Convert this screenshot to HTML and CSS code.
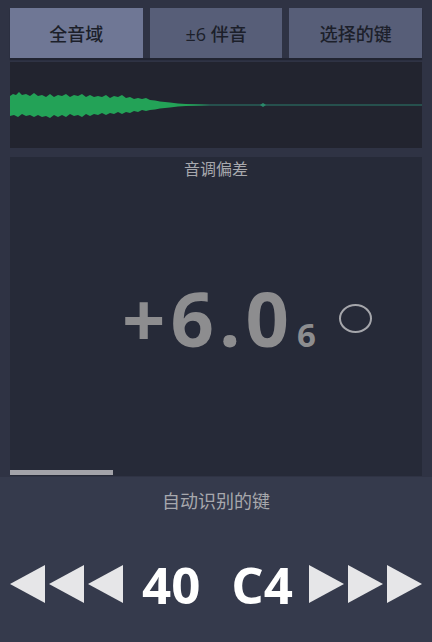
FILE: index.html
```html
<!DOCTYPE html>
<html lang="zh">
<head>
<meta charset="utf-8">
<link rel="stylesheet" href="styles.css">
</head>
<body>
<div class="top">
  <div class="tabs">
    <div class="tab active">全音域</div>
    <div class="tab">±6 伴音</div>
    <div class="tab">选择的键</div>
  </div>
  <div class="wave">
    <svg width="412" height="86" viewBox="0 0 412 86">
      <path d="M0 43 L412 43" stroke="#2b7d6c" stroke-width="1.2" fill="none"/>
      <path fill="#23a257" d="M0 34 L3 32 L6 33 L9 30 L12 33 L16 32 L20 34 L24 31 L28 34 L32 33 L36 35 L40 32 L44 35 L48 33 L52 34 L56 32 L60 35 L64 33 L68 34 L72 32 L76 35 L80 33 L84 35 L88 34 L92 35 L96 33 L100 36 L104 34 L108 35 L112 33 L116 36 L120 35 L124 37 L128 36 L132 37 L136 36 L140 38 L145 38.5 L150 39.5 L155 40 L160 40.5 L168 41.5 L176 42 L190 42.5 L200 43 L190 43.5 L176 44 L168 44.5 L160 45.5 L155 46 L150 46.5 L145 47.5 L140 48 L136 49 L132 48 L128 50 L124 49 L120 51 L116 50 L112 52 L108 50 L104 52 L100 51 L96 53 L92 51 L88 53 L84 52 L80 54 L76 52 L72 55 L68 53 L64 54 L60 52 L56 55 L52 53 L48 55 L44 53 L40 56 L36 54 L32 55 L28 53 L24 55 L20 53 L16 54 L12 52 L8 55 L4 53 L0 54 Z"/>
      <path fill="#2a8a6a" d="M253 41 L256 43 L253 45 L250 43 Z"/>
    </svg>
  </div>
  <div class="tuner">
    <div class="label">音调偏差</div>
    <div class="readout">
      <span class="big">+6.0</span><span class="small">6</span><span class="ring"></span>
    </div>
    <div class="progress"><div class="bar" style="width:103px"></div></div>
  </div>
</div>
<div class="bottom">
  <div class="label2">自动识别的键</div>
  <div class="keys">
    <div class="arrows">
      <svg class="tri" width="35" height="38" viewBox="0 0 35 38"><path d="M0 19 L35 0 L35 38 Z"/></svg>
      <svg class="tri" width="35" height="38" viewBox="0 0 35 38"><path d="M0 19 L35 0 L35 38 Z"/></svg>
      <svg class="tri" width="35" height="38" viewBox="0 0 35 38"><path d="M0 19 L35 0 L35 38 Z"/></svg>
    </div>
    <span class="num n1">40</span>
    <span class="num n2">C4</span>
    <div class="arrows">
      <svg class="tri" width="35" height="38" viewBox="0 0 35 38"><path d="M0 0 L35 19 L0 38 Z"/></svg>
      <svg class="tri" width="35" height="38" viewBox="0 0 35 38"><path d="M0 0 L35 19 L0 38 Z"/></svg>
      <svg class="tri" width="35" height="38" viewBox="0 0 35 38"><path d="M0 0 L35 19 L0 38 Z"/></svg>
    </div>
  </div>
</div>
</body>
</html>
```
FILE: styles.css
```css
html, body {
  margin: 0;
  padding: 0;
}
body {
  width: 432px;
  height: 642px;
  background: #353a4c;
  font-family: "Open Sans", "Noto Sans CJK SC", sans-serif;
  overflow: hidden;
}
.top {
  background: #2f3344;
  padding: 8px 10px 0 10px;
  height: 469px;
}
.tabs {
  display: flex;
  gap: 7px;
  height: 50px;
  box-shadow: 0 2px 1px rgba(20, 22, 30, 0.5);
}
.tab {
  flex: 1;
  background: #575e78;
  color: #1c1f2a;
  font-size: 18px;
  display: flex;
  align-items: center;
  justify-content: center;
  font-weight: 500;
}
.tab.active {
  background: #6f7795;
}
.wave {
  margin-top: 4px;
  height: 86px;
  background: #22242f;
}
.wave svg {
  display: block;
}
.tuner {
  margin-top: 9px;
  height: 319px;
  background: #262a38;
  display: flex;
  flex-direction: column;
}
.label {
  text-align: center;
  color: #a7a8ad;
  font-size: 16px;
  line-height: 22px;
  margin-top: 1px;
}
.readout {
  display: flex;
  align-items: baseline;
  padding-left: 112px;
  margin-top: 98px;
  height: 80px;
}
.big {
  font-size: 76px;
  font-weight: 700;
  color: #8d8d8f;
  letter-spacing: 5px;
  line-height: 80px;
}
.small {
  font-size: 33px;
  font-weight: 700;
  color: #8d8d8f;
  margin-left: 3px;
}
.ring {
  width: 29px;
  height: 25px;
  border: 2px solid #a5a6ab;
  border-radius: 50%;
  margin-left: 23px;
  align-self: flex-start;
  margin-top: 26px;
}
.progress {
  margin-top: auto;
  height: 6px;
  background: #262a38;
}
.bar {
  height: 5px;
  background: #a3a3a9;
}
.bottom {
  height: 173px;
  display: flex;
  flex-direction: column;
  align-items: center;
}
.label2 {
  margin-top: 12px;
  color: #a7a8ad;
  font-size: 18px;
  line-height: 24px;
}
.keys {
  margin-top: 47px;
  width: 412px;
  display: flex;
  align-items: center;
  height: 48px;
}
.arrows {
  display: flex;
  gap: 4px;
}
.tri {
  display: block;
  fill: #e6e6e8;
}
.num {
  color: #ffffff;
  font-size: 51px;
  font-weight: 700;
  line-height: 48px;
}
.n1 {
  margin-left: 19px;
}
.n2 {
  margin-left: 31px;
  margin-right: auto;
}
```
